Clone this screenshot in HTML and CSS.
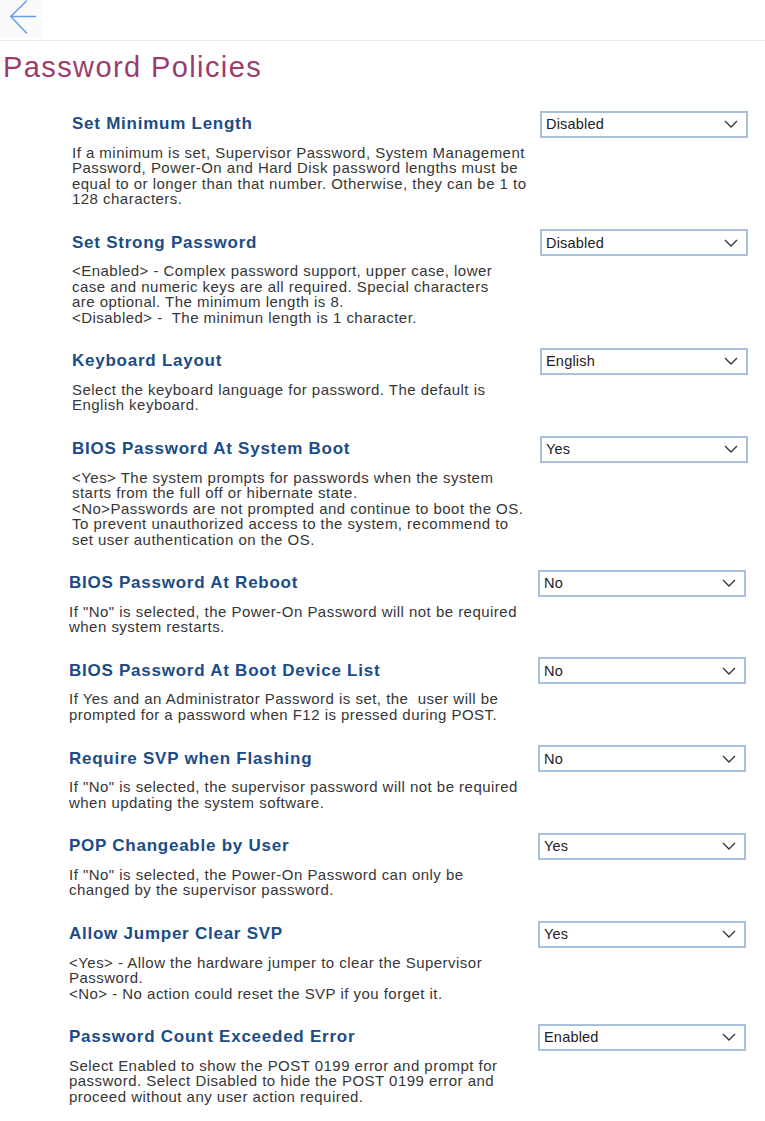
FILE: index.html
```html
<!DOCTYPE html>
<html lang="en">
<head>
<meta charset="utf-8">
<title>Password Policies</title>
<link rel="stylesheet" href="styles.css">
</head>
<body>
<header class="topbar">
  <button class="back" aria-label="Back">
    <svg width="42" height="38" viewBox="0 0 42 38"><path d="M35.5 16.5H11M26.5 1L10.8 16.5L26.5 33" stroke="#6c9de6" stroke-width="1.6" fill="none" stroke-linecap="round" stroke-linejoin="round"/></svg>
  </button>
</header>
<h1 class="page-title">Password Policies</h1>

<section class="group group-a">
  <div class="setting">
    <div class="setting-head"><h2>Set Minimum Length</h2><div class="select"><span>Disabled</span><svg class="chev" width="14" height="8" viewBox="0 0 14 8"><path d="M1 1l6 6 6-6" stroke="#333" stroke-width="1.3" fill="none"/></svg></div></div>
    <p class="desc">If a minimum is set, Supervisor Password, System Management<br>Password, Power-On and Hard Disk password lengths must be<br>equal to or longer than that number. Otherwise, they can be 1 to<br>128 characters.</p>
  </div>
  <div class="setting">
    <div class="setting-head"><h2>Set Strong Password</h2><div class="select"><span>Disabled</span><svg class="chev" width="14" height="8" viewBox="0 0 14 8"><path d="M1 1l6 6 6-6" stroke="#333" stroke-width="1.3" fill="none"/></svg></div></div>
    <p class="desc">&lt;Enabled&gt; - Complex password support, upper case, lower<br>case and numeric keys are all required. Special characters<br>are optional. The minimum length is 8.<br>&lt;Disabled&gt; -&nbsp; The minimun length is 1 character.</p>
  </div>
  <div class="setting">
    <div class="setting-head"><h2>Keyboard Layout</h2><div class="select"><span>English</span><svg class="chev" width="14" height="8" viewBox="0 0 14 8"><path d="M1 1l6 6 6-6" stroke="#333" stroke-width="1.3" fill="none"/></svg></div></div>
    <p class="desc">Select the keyboard language for password. The default is<br>English keyboard.</p>
  </div>
  <div class="setting">
    <div class="setting-head"><h2>BIOS Password At System Boot</h2><div class="select"><span>Yes</span><svg class="chev" width="14" height="8" viewBox="0 0 14 8"><path d="M1 1l6 6 6-6" stroke="#333" stroke-width="1.3" fill="none"/></svg></div></div>
    <p class="desc">&lt;Yes&gt; The system prompts for passwords when the system<br>starts from the full off or hibernate state.<br>&lt;No&gt;Passwords are not prompted and continue to boot the OS.<br>To prevent unauthorized access to the system, recommend to<br>set user authentication on the OS.</p>
  </div>
</section>

<section class="group group-b">
  <div class="setting">
    <div class="setting-head"><h2>BIOS Password At Reboot</h2><div class="select"><span>No</span><svg class="chev" width="14" height="8" viewBox="0 0 14 8"><path d="M1 1l6 6 6-6" stroke="#333" stroke-width="1.3" fill="none"/></svg></div></div>
    <p class="desc">If "No" is selected, the Power-On Password will not be required<br>when system restarts.</p>
  </div>
  <div class="setting">
    <div class="setting-head"><h2>BIOS Password At Boot Device List</h2><div class="select"><span>No</span><svg class="chev" width="14" height="8" viewBox="0 0 14 8"><path d="M1 1l6 6 6-6" stroke="#333" stroke-width="1.3" fill="none"/></svg></div></div>
    <p class="desc">If Yes and an Administrator Password is set, the&nbsp; user will be<br>prompted for a password when F12 is pressed during POST.</p>
  </div>
  <div class="setting">
    <div class="setting-head"><h2>Require SVP when Flashing</h2><div class="select"><span>No</span><svg class="chev" width="14" height="8" viewBox="0 0 14 8"><path d="M1 1l6 6 6-6" stroke="#333" stroke-width="1.3" fill="none"/></svg></div></div>
    <p class="desc">If "No" is selected, the supervisor password will not be required<br>when updating the system software.</p>
  </div>
  <div class="setting">
    <div class="setting-head"><h2>POP Changeable by User</h2><div class="select"><span>Yes</span><svg class="chev" width="14" height="8" viewBox="0 0 14 8"><path d="M1 1l6 6 6-6" stroke="#333" stroke-width="1.3" fill="none"/></svg></div></div>
    <p class="desc">If "No" is selected, the Power-On Password can only be<br>changed by the supervisor password.</p>
  </div>
  <div class="setting">
    <div class="setting-head"><h2>Allow Jumper Clear SVP</h2><div class="select"><span>Yes</span><svg class="chev" width="14" height="8" viewBox="0 0 14 8"><path d="M1 1l6 6 6-6" stroke="#333" stroke-width="1.3" fill="none"/></svg></div></div>
    <p class="desc">&lt;Yes&gt; - Allow the hardware jumper to clear the Supervisor<br>Password.<br>&lt;No&gt; - No action could reset the SVP if you forget it.</p>
  </div>
  <div class="setting">
    <div class="setting-head"><h2>Password Count Exceeded Error</h2><div class="select"><span>Enabled</span><svg class="chev" width="14" height="8" viewBox="0 0 14 8"><path d="M1 1l6 6 6-6" stroke="#333" stroke-width="1.3" fill="none"/></svg></div></div>
    <p class="desc">Select Enabled to show the POST 0199 error and prompt for<br>password. Select Disabled to hide the POST 0199 error and<br>proceed without any user action required.</p>
  </div>
</section>
</body>
</html>
```

FILE: styles.css
```css
html, body {
  margin: 0;
  padding: 0;
  background: #ffffff;
}
body {
  font-family: "Liberation Sans", Arial, sans-serif;
  color: #363636;
}
.topbar {
  height: 40px;
  border-bottom: 1px solid #eeeaec;
  display: flex;
  align-items: flex-start;
}
.back {
  width: 42px;
  height: 38px;
  padding: 0;
  margin: 0;
  border: none;
  background: #fafafa;
  display: block;
  cursor: pointer;
}
.back svg {
  display: block;
}
.page-title {
  margin: 0 0 17.5px 0;
  padding-left: 3px;
  height: 52px;
  line-height: 52px;
  font-size: 29px;
  font-weight: normal;
  letter-spacing: 1.4px;
  color: #9d3c6b;
}
.group-a {
  padding: 0 17px 0 72px;
}
.group-b {
  padding: 0 19px 0 69px;
}
.setting {
  padding-bottom: 22.7px;
}
.setting-head {
  display: flex;
  justify-content: space-between;
  align-items: center;
  height: 27px;
}
.setting-head h2 {
  margin: 0;
  font-size: 17px;
  font-weight: bold;
  letter-spacing: 0.75px;
  color: #1c4c86;
}
.select {
  box-sizing: border-box;
  width: 208px;
  height: 27px;
  border: 2px solid #a9c0dc;
  background: #fff;
  display: flex;
  align-items: center;
  justify-content: space-between;
  padding: 0 8px 0 4px;
  font-size: 14.5px;
  letter-spacing: 0.2px;
  color: #222;
}
.chev {
  display: block;
}
.desc {
  margin: 7px 0 0 0;
  font-size: 15px;
  line-height: 15.5px;
  letter-spacing: 0.47px;
  white-space: nowrap;
  color: #363636;
}
```
